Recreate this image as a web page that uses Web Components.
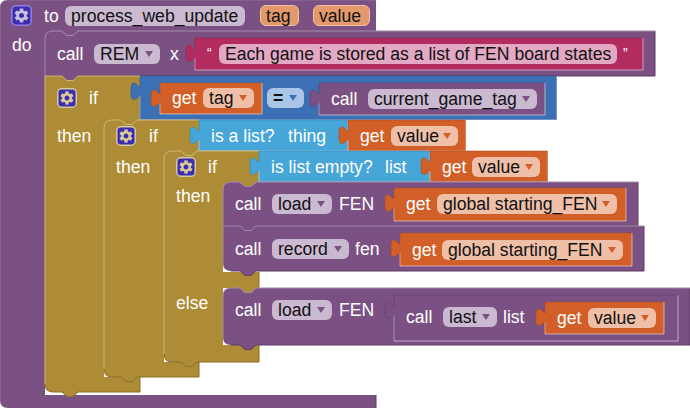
<!DOCTYPE html>
<html>
<head>
<meta charset="utf-8">
<title>process_web_update</title>
<style>
  body { margin: 0; background: #fff; }
</style>
</head>
<body>
<ai-canvas>
  <ai-block color="purple" x="0" y="0" w="376" h="408" col="45" segs="31 395 408" plain>
    <ai-row h="31">
      <ai-gear ml="11" size="21" tone="pale"></ai-gear>
      <ai-label ml="12" w="21">to</ai-label>
      <ai-field w="180">process_web_update</ai-field>
      <ai-field ml="15" w="39" param>tag</ai-field>
      <ai-field ml="14" w="57" param>value</ai-field>
    </ai-row>
    <ai-row h="28"><ai-label ml="12">do</ai-label></ai-row>
  </ai-block>

  <ai-block color="purple" x="45" y="31" w="610" h="45" round="tl">
    <ai-row h="45">
      <ai-label ml="12" w="37">call</ai-label>
      <ai-field w="66" arrow>REM</ai-field>
      <ai-label ml="10" w="25">x</ai-label>
      <ai-block color="pink" w="448" h="32" kind="value">
        <ai-label ml="12" w="12" small>“</ai-label>
        <ai-field w="398">Each game is stored as a list of FEN board states</ai-field>
        <ai-label ml="6" small>”</ai-label>
      </ai-block>
    </ai-row>
  </ai-block>

  <ai-block color="gold" x="45" y="76" w="95" h="316" col="59" segs="44 301 316" square>
    <ai-row h="44">
      <ai-gear ml="12"></ai-gear>
      <ai-label ml="12" w="51">if</ai-label>
      <ai-block color="blue" w="417" h="44" kind="value">
        <ai-block color="orange" ml="20" w="102" h="31" kind="value">
          <ai-label ml="12" w="31">get</ai-label>
          <ai-field w="51" arrow>tag</ai-field>
        </ai-block>
        <ai-field ml="5" w="37" arrow class="eq">=</ai-field>
        <ai-block color="purple" ml="15" w="226" h="32" kind="value" style="margin-top:2px">
          <ai-label ml="12" w="37">call</ai-label>
          <ai-field w="169" arrow>current_game_tag</ai-field>
        </ai-block>
      </ai-block>
    </ai-row>
    <ai-row h="31"><ai-label ml="12">then</ai-label></ai-row>
  </ai-block>

  <ai-block color="gold" x="104" y="120" w="95" h="257" col="60" segs="31 242 257">
    <ai-row h="31">
      <ai-gear ml="12"></ai-gear>
      <ai-label ml="13" w="50">if</ai-label>
      <ai-block color="sky" w="149" h="31" kind="value">
        <ai-label ml="12" w="77">is a list?</ai-label>
        <ai-label>thing</ai-label>
      </ai-block>
      <ai-block color="orange" w="118" h="31" kind="value">
        <ai-label ml="12" w="31">get</ai-label>
        <ai-field w="67" arrow>value</ai-field>
      </ai-block>
    </ai-row>
    <ai-row h="31"><ai-label ml="12">then</ai-label></ai-row>
  </ai-block>

  <ai-block color="gold" x="164" y="151" w="95" h="211" col="59" segs="31 121 137 194 211">
    <ai-row h="31">
      <ai-gear ml="12"></ai-gear>
      <ai-label ml="12" w="51">if</ai-label>
      <ai-block color="sky" w="171" h="31" kind="value">
        <ai-label ml="12" w="114">is list empty?</ai-label>
        <ai-label>list</ai-label>
      </ai-block>
      <ai-block color="orange" w="118" h="31" kind="value">
        <ai-label ml="12" w="30">get</ai-label>
        <ai-field w="68" arrow>value</ai-field>
      </ai-block>
    </ai-row>
    <ai-row h="28"><ai-label ml="12">then</ai-label></ai-row>
    <ai-row h="28" style="margin-top:79px"><ai-label ml="12">else</ai-label></ai-row>
  </ai-block>

  <ai-block color="purple" x="223" y="182" w="415" h="44" round="tl">
    <ai-row h="44">
      <ai-label ml="12" w="37">call</ai-label>
      <ai-field w="60" arrow>load</ai-field>
      <ai-label ml="7" w="55">FEN</ai-label>
      <ai-block color="orange" w="232" h="33" kind="value">
        <ai-label ml="12" w="31">get</ai-label>
        <ai-field w="180" arrow>global starting_FEN</ai-field>
      </ai-block>
    </ai-row>
  </ai-block>

  <ai-block color="purple" x="223" y="226" w="421" h="45" round="bl">
    <ai-row h="45">
      <ai-label ml="12" w="37">call</ai-label>
      <ai-field w="77" arrow>record</ai-field>
      <ai-label ml="6" w="45">fen</ai-label>
      <ai-block color="orange" w="232" h="33" kind="value" style="margin-top:2px">
        <ai-label ml="12" w="30">get</ai-label>
        <ai-field w="181" arrow>global starting_FEN</ai-field>
      </ai-block>
    </ai-row>
  </ai-block>

  <ai-block color="purple" x="223" y="288" w="467" h="57" round="tl bl">
    <ai-row h="43">
      <ai-label ml="12" w="37">call</ai-label>
      <ai-field w="60" arrow>load</ai-field>
      <ai-label ml="7" w="55">FEN</ai-label>
      <ai-block color="purple" w="284" h="46" kind="value" style="align-self:flex-start;margin-top:7px">
        <ai-label ml="12" w="37" style="margin-top:-3px">call</ai-label>
        <ai-field w="54" arrow style="margin-top:-3px">last</ai-field>
        <ai-label ml="6" w="42" style="margin-top:-3px">list</ai-label>
        <ai-block color="orange" w="119" h="32" kind="value">
          <ai-label ml="12" w="31">get</ai-label>
          <ai-field w="68" arrow>value</ai-field>
        </ai-block>
      </ai-block>
    </ai-row>
  </ai-block>
</ai-canvas>

<script>
const COLORS = {
  purple: { fill: "#7b5183", light: "#a48cab", dark: "#5f3d67", field: "#cbb8d1", arrow: "#7b5183" },
  gold: { fill: "#ae8b35", light: "#cdb67c", dark: "#8b6e27", field: "#e4d5a8", arrow: "#ae8b35" },
  orange: { fill: "#d25f28", light: "#e5996f", dark: "#a84a1e", field: "#efbfa8", arrow: "#d25f28" },
  blue: { fill: "#3b71b4", light: "#7fa3d0", dark: "#2d5a92", field: "#a9c6e8", arrow: "#3b71b4" },
  sky: { fill: "#47a6d8", light: "#8dc8e8", dark: "#3987b0", field: "#b5dbf0", arrow: "#47a6d8" },
  pink: { fill: "#b32c60", light: "#d47d9e", dark: "#8f234c", field: "#e3a9c4", arrow: "#b32c60" },
};

const RADIUS = 8;
const NOTCH = 17;

// notch in a top edge going right, bump on a bottom edge going left
const notch = (x) => `H${x} l5,4.5 h6 l5,-4.5`;
const bump = (x) => `H${x + 16} l-5,4.5 h-6 l-5,-4.5`;

const TAB = "V20 C-2,20 -3,23.5 -6,23.5 C-9,23.5 -9,21 -9,15.5 C-9,10 -9,7 -6,7 C-3,7 -2,11 0,11";

function topLeft(tl, withNotch, w) {
  const start = tl ? `V${RADIUS} Q0,0 ${RADIUS},0` : "V0";
  return `${start} ${withNotch ? notch(NOTCH) : ""} H${w}`;
}

function setAttrs(el) {
  if (el.hasAttribute("ml")) el.style.marginLeft = el.getAttribute("ml") + "px";
  if (el.hasAttribute("w")) el.style.width = el.getAttribute("w") + "px";
}

const blockTemplate = document.createElement("template");
blockTemplate.innerHTML = `
  <style>
    :host { display: block; position: relative; flex: none; box-sizing: border-box; }
    svg { position: absolute; left: 0; top: 0; overflow: visible; display: block; }
    .content { position: relative; display: flex; flex-direction: column; height: 100%; }
    :host([kind="value"]) .content { flex-direction: row; align-items: center; }
    :host([kind="value"]) .dark { stroke-opacity: .55; }
    :host([plain]) .light { stroke-opacity: .5; }
  </style>
  <svg xmlns="http://www.w3.org/2000/svg">
    <path class="fill"></path>
    <path class="dark" fill="none"></path>
    <path class="light" fill="none"></path>
    <path class="socket" fill="none" stroke="rgba(255,255,255,.5)"></path>
  </svg>
  <div class="content"><slot></slot></div>
`;

class AiBlock extends HTMLElement {
  constructor() {
    super();
    this.attachShadow({ mode: "open" });
    this.shadowRoot.append(blockTemplate.content.cloneNode(true));
  }

  connectedCallback() {
    setAttrs(this);
    const w = +this.getAttribute("w");
    const h = +this.getAttribute("h");
    this.style.height = h + "px";
    if (this.hasAttribute("x")) {
      this.style.position = "absolute";
      this.style.left = this.getAttribute("x") + "px";
      this.style.top = this.getAttribute("y") + "px";
    }
    const c = COLORS[this.getAttribute("color")];
    const svg = this.shadowRoot.querySelector("svg");
    svg.setAttribute("width", w);
    svg.setAttribute("height", h);

    let outline, lightLine, darkLine;
    let socket = "";
    if (this.getAttribute("kind") === "value") {
      outline = `M0,${h} ${TAB} V0 H${w} V${h} Z`;
      lightLine = `M0,${h} V20`;
      darkLine = `M0,20 ${TAB.slice(TAB.indexOf("C"))} V0 H${w}`;
      socket = `M0,${h} H${w} V0`;
    } else if (this.hasAttribute("segs")) {
      outline = this.colPath(w, h);
      lightLine = `M0,${h - RADIUS} ${topLeft(!this.hasAttribute("square"), !this.hasAttribute("plain"), w)}`;
      darkLine = this.colEdges(w, h);
    } else {
      const round = this.getAttribute("round") || "";
      const bl = round.includes("bl");
      const tl = round.includes("tl");
      outline = `M0,${bl ? h - RADIUS : h} ${topLeft(tl, true, w)} V${h} ${bump(NOTCH)} ` +
        (bl ? `H${RADIUS} Q0,${h} 0,${h - RADIUS}` : "H0") + " Z";
      lightLine = `M0,${bl ? h - RADIUS : h} ${topLeft(tl, true, w)}`;
      darkLine = `M${w},0 V${h} ${bump(NOTCH)} H${bl ? RADIUS : 0}`;
    }

    const fill = this.shadowRoot.querySelector(".fill");
    fill.setAttribute("d", outline + this.patch());
    fill.setAttribute("fill", c.fill);
    const dark = this.shadowRoot.querySelector(".dark");
    dark.setAttribute("d", darkLine);
    dark.setAttribute("stroke", c.dark);
    const light = this.shadowRoot.querySelector(".light");
    light.setAttribute("d", lightLine);
    light.setAttribute("stroke", c.light);
    this.shadowRoot.querySelector(".socket").setAttribute("d", socket);

    // fields and arrows pick the colours of the block they sit in
    this.style.setProperty("--field", c.field);
    this.style.setProperty("--arrow", c.arrow);
  }

  // square off the hollow's top left corner, so a rounded child shows the parent behind it
  patch() {
    if (!this.hasAttribute("segs")) return "";
    const col = +this.getAttribute("col");
    const head = +this.getAttribute("segs").split(" ")[0];
    return ` M${col},${head} h9 v9 h-9 Z`;
  }

  colPath(w, h) {
    const col = +this.getAttribute("col");
    const segs = this.getAttribute("segs").split(" ").map(Number);
    const plain = this.hasAttribute("plain");
    const square = this.hasAttribute("square");
    let p = `M0,${h - RADIUS} ${topLeft(!square, !plain, w)} V${segs[0]}`;
    for (let i = 1; i < segs.length; i += 2) {
      p += ` ${bump(col + NOTCH)} H${col} V${segs[i]} H${w} V${segs[i + 1]}`;
    }
    p += plain ? "" : ` ${bump(NOTCH)}`;
    return `${p} H${RADIUS} Q0,${h} 0,${h - RADIUS} Z`;
  }

  // only the outer edges of the bars get the dark line
  colEdges(w, h) {
    const segs = this.getAttribute("segs").split(" ").map(Number);
    let p = "";
    for (let i = 1; i < segs.length; i += 2) {
      p += `M${w},${segs[i]} V${segs[i + 1]} `;
    }
    if (this.hasAttribute("plain")) return p;
    return `${p} ${bump(NOTCH)} H${RADIUS} Q0,${h} 0,${h - RADIUS}`;
  }
}

const rowTemplate = document.createElement("template");
rowTemplate.innerHTML = `
  <style>
    :host { display: flex; align-items: center; flex: none; }
  </style>
  <slot></slot>
`;

class AiRow extends HTMLElement {
  constructor() {
    super();
    this.attachShadow({ mode: "open" }).append(rowTemplate.content.cloneNode(true));
  }

  connectedCallback() {
    this.style.height = this.getAttribute("h") + "px";
  }
}

const labelTemplate = document.createElement("template");
labelTemplate.innerHTML = `
  <style>
    :host { display: block; flex: none; color: #fff; white-space: nowrap; line-height: 20px; }
    :host([small]) { font-size: 14px; margin-top: -2px; }
  </style>
  <slot></slot>
`;

class AiLabel extends HTMLElement {
  constructor() {
    super();
    this.attachShadow({ mode: "open" }).append(labelTemplate.content.cloneNode(true));
  }

  connectedCallback() {
    setAttrs(this);
  }
}

const fieldTemplate = document.createElement("template");
fieldTemplate.innerHTML = `
  <style>
    :host {
      display: flex; flex: none; align-items: center; justify-content: space-between;
      box-sizing: border-box; height: 20px; padding: 0 7px 0 6px; border-radius: 6px;
      background: var(--field); color: #111; white-space: nowrap; line-height: 20px;
    }
    :host([param]) {
      height: 21px; background: #e3996c; border: 1.5px solid #f0c2a2; padding-left: 5px;
    }
    :host(.eq) { font-weight: bold; }
    .arrow { display: none; width: 0; height: 0; border: 4px solid transparent; border-top: 6px solid var(--arrow); border-bottom: 0; }
    :host([arrow]) .arrow { display: block; }
  </style>
  <span><slot></slot></span>
  <span class="arrow"></span>
`;

class AiField extends HTMLElement {
  constructor() {
    super();
    this.attachShadow({ mode: "open" }).append(fieldTemplate.content.cloneNode(true));
  }

  connectedCallback() {
    setAttrs(this);
  }
}

const gearTemplate = document.createElement("template");
gearTemplate.innerHTML = `
  <style>
    :host { display: block; flex: none; }
    svg { display: block; }
  </style>
  <svg xmlns="http://www.w3.org/2000/svg" viewBox="0 0 20 20">
    <rect class="box" x=".75" y=".75" width="18.5" height="18.5" rx="4" stroke-width="1.5"></rect>
    <g class="cog" fill="none" transform="translate(10 10)">
      <circle r="3.7" stroke-width="2.6"></circle>
      <g class="teeth"></g>
    </g>
  </svg>
`;

class AiGear extends HTMLElement {
  constructor() {
    super();
    this.attachShadow({ mode: "open" }).append(gearTemplate.content.cloneNode(true));
  }

  connectedCallback() {
    setAttrs(this);
    const size = this.getAttribute("size") || 20;
    const svg = this.shadowRoot.querySelector("svg");
    svg.setAttribute("width", size);
    svg.setAttribute("height", size);
    const pale = this.getAttribute("tone") === "pale";
    const tone = pale ? "#cbbfe0" : "#d9c998";
    const box = this.shadowRoot.querySelector(".box");
    box.setAttribute("fill", "#3c2cb0");
    box.setAttribute("stroke", pale ? "#8d80dc" : "#d6c8a4");
    this.shadowRoot.querySelector("circle").setAttribute("stroke", tone);
    let teeth = "";
    for (let a = 0; a < 360; a += 60) {
      teeth += `<rect x="-1.7" y="-6.6" width="3.4" height="2.6" fill="${tone}" transform="rotate(${a})"></rect>`;
    }
    this.shadowRoot.querySelector(".teeth").innerHTML = teeth;
  }
}

const canvasTemplate = document.createElement("template");
canvasTemplate.innerHTML = `
  <style>
    :host {
      display: block; position: relative; width: 690px; height: 408px; overflow: hidden;
      background: #fff; font: 17.6px "Liberation Sans", Arial, sans-serif;
    }
  </style>
  <slot></slot>
`;

class AiCanvas extends HTMLElement {
  constructor() {
    super();
    this.attachShadow({ mode: "open" }).append(canvasTemplate.content.cloneNode(true));
  }
}

customElements.define("ai-canvas", AiCanvas);
customElements.define("ai-block", AiBlock);
customElements.define("ai-row", AiRow);
customElements.define("ai-label", AiLabel);
customElements.define("ai-field", AiField);
customElements.define("ai-gear", AiGear);
</script>
</body>
</html>
